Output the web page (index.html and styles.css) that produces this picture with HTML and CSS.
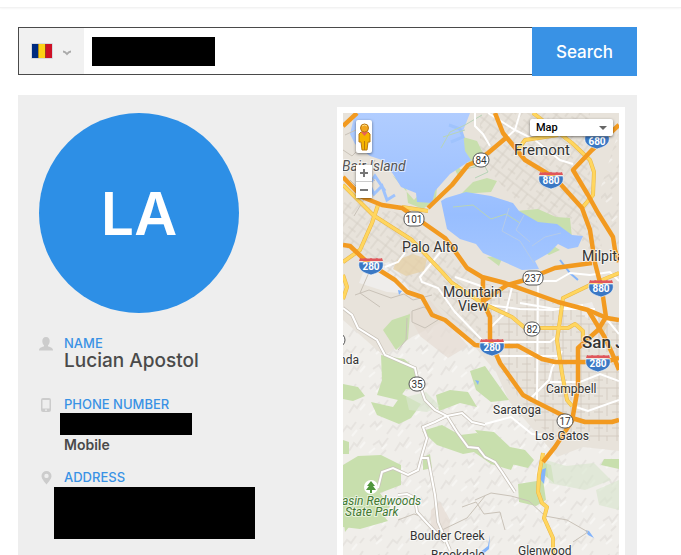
FILE: index.html
```html
<!DOCTYPE html>
<html lang="en">
<head>
    <meta charset="UTF-8">
    <meta name="viewport" content="width=device-width, initial-scale=1.0">
    <link rel="stylesheet" href="styles.css">
    <title>Lucian Apostol</title>
</head>
<body>
    <header class="topbar"></header>
    <main class="content">
        <form class="search">
            <button type="button" class="country" aria-label="Country: Romania">
                <svg class="flag" width="22" height="16" viewBox="0 0 22 16">
                    <rect width="22" height="16" rx="1" fill="#d5d9e0"/>
                    <rect x="1" y="1" width="7" height="14" fill="#002b7f"/>
                    <rect x="7" y="1" width="7" height="14" fill="#fcd116"/>
                    <rect x="14" y="1" width="7" height="14" fill="#ce1126"/>
                    <path d="M7.500 1v14M14.500 1v14" stroke="#7a5a20" stroke-opacity=".6"/>
                </svg>
                <svg class="chevron" width="8" height="6" viewBox="0 0 8 6">
                    <path d="M0 1.500Q2 1.500 4 4Q6 1.500 8 1.500" fill="none" stroke="#aaa" stroke-width="2"/>
                </svg>
            </button>
            <div class="field">
                <input type="text" aria-label="Phone number">
                <span class="mask mask-query"></span>
            </div>
            <button type="submit" class="submit">Search</button>
        </form>

        <section class="panel">
            <div class="profile">
                <div class="avatar">LA</div>
                <div class="row">
                    <svg width="14" height="14" viewBox="0 0 14 14" fill="#ccc">
                        <path d="M7 0c2.500 0 3.700 1.700 3.700 4 0 1.800-.6 3.300-1.700 4.200v1c1 .8 5 1.100 5 3.800v.5H0V13c0-2.700 4-3 5-3.800v-1C3.900 7.300 3.300 5.800 3.300 4c0-2.300 1.200-4 3.700-4z"/>
                    </svg>
                    <div>
                        <h4>NAME</h4>
                        <p class="name">Lucian Apostol</p>
                    </div>
                </div>
                <div class="row row-phone">
                    <svg width="14" height="14" viewBox="0 0 14 14" fill="#ccc" fill-rule="evenodd">
                        <path d="M4 0h6a2 2 0 0 1 2 2v10a2 2 0 0 1-2 2H4a2 2 0 0 1-2-2V2a2 2 0 0 1 2-2zM3.500 2v8.500h7V2zM6 11.500v1.200h2v-1.200z"/>
                    </svg>
                    <div>
                        <h4>PHONE NUMBER</h4>
                        <div class="mask mask-phone"></div>
                        <p class="type">Mobile</p>
                    </div>
                </div>
                <div class="row row-address">
                    <svg width="14" height="14" viewBox="0 0 14 14" fill="#ccc" fill-rule="evenodd">
                        <path d="M7.500 0a5 5 0 0 1 5 5c0 2.800-3 6-5 8.500C5.500 11 2.500 7.800 2.500 5a5 5 0 0 1 5-5zm0 2.700a2.200 2.200 0 1 0 0 4.400 2.200 2.200 0 0 0 0-4.400z"/>
                    </svg>
                    <div>
                        <h4>ADDRESS</h4>
                        <div class="mask mask-address"></div>
                    </div>
                </div>
            </div>

            <div class="map">
                <svg class="map-canvas" viewBox="343 113 276 442" preserveAspectRatio="xMidYMin slice">
                    <defs>
                        <linearGradient id="water" x2="0" y2="1">
                            <stop offset="0" stop-color="#b1cdff"/>
                            <stop offset=".65" stop-color="#98beff"/>
                            <stop offset="1" stop-color="#a5c7ff"/>
                        </linearGradient>
                        <pattern id="grid" width="18" height="16" patternUnits="userSpaceOnUse">
                            <path d="M0 4h18M0 12h9M5 0v16M13 4v12" fill="none" stroke="#d0c8be" stroke-width=".8"/>
                        </pattern>
                        <pattern id="slant" width="18" height="16" patternUnits="userSpaceOnUse" patternTransform="rotate(38)">
                            <path d="M0 4h18M0 12h9M5 0v16M13 4v12" fill="none" stroke="#d2cbc2" stroke-width=".8"/>
                        </pattern>
                        <pattern id="hills" width="46" height="38" patternUnits="userSpaceOnUse">
                            <g fill="none" stroke="#a9a69f" stroke-opacity=".14" stroke-width="2">
                                <path d="M2 9l5-5 2 4 5-5M19 16l6-8 4 3 5-7M5 27l6-4 3 5 6-8M27 33l5-8 3 3 6-9M38 11l4-5M13 37l5-5"/>
                            </g>
                            <path d="M8 12l6-5M30 18l5-6M14 31l5-5M38 30l5-6M1 35l6-5" stroke="#fff" stroke-opacity=".4" stroke-width="2"/>
                        </pattern>
                        <g id="interstate">
                            <path d="M-12-4h24c2 9-6 11-12 13-6-2-14-4-12-13z" fill="#3b78c4" stroke="#fff" stroke-width=".6"/>
                            <path d="M-11-8q3 1 5 0 3 1 6 0 3 1 6 0 2 1 5 0l1 3h-24z" fill="#e0565b"/>
                        </g>
                        <rect id="badge" x="-8" y="-7" width="16" height="14" rx="7" fill="#fff" stroke="#555"/>
                        <rect id="badge-wide" x="-10" y="-7" width="20" height="14" rx="6" fill="#fff" stroke="#555"/>
                    </defs>

                    <rect x="343" y="113" width="276" height="600" fill="#e8e3db"/>
                    <path d="M343 320l16 14 25 22 28-19 34-17 29 27 21 25 13 29 29 34 19 22 26-10 36 4v270H343z" fill="#f0eeea"/>
                    <path d="M365 268l24-6 11 12 12 20-25-2-28-9zM583 304l9-2 9 24-19-11z" fill="#efedeb"/>
                    <path d="M343 320l16 14 25 22 28-19 34-17 29 27 21 25 13 29 29 34 19 22 26-10 36 4v270H343zM600 190l19-60v120l-15-30z" fill="url(#hills)"/>
                    <path d="M430 300l18 22 20 24-20 12-28-22-12-22zM431 510l9-8 10 18-2 25-18-12z" fill="#e5dcd3" opacity=".7"/>
                    <path d="M343 200l60 14 65 58 17 76-27-23-28-28-30-15-30-25-27-10z" fill="url(#slant)"/>
                    <path d="M480 282l80 22 59 14v123h-60l-22-17-30-43-20-35z" fill="url(#grid)"/>
                    <path d="M480 113h110v70l13 70-11 0-24-30-44-15-20-20-24-30z" fill="url(#slant)"/>

                    <g fill="#c8dfad">
                        <path d="M463 137l14 4 6 12-5 14-8-2-8-16zM487 178l10 3-6 11-30 2 12-12zM516 211l22-2 18 8 14 1 2 20-14 4-18-13-20-5zM447 145l10 18 6 12-4 3-13-27z"/>
                        <path d="M392 175l14 12 2 16 15 6 13-10 1-12-12 1-11 12zM392 320l18-6-2 25-12 11-13-20z"/>
                        <path d="M381 355l23 4 11 9 1 22-10-1-8 11-21-5 5-15zM371 402l22 5 9-13 19 10-10 14-12 6-22-9zM470 371l15-5 24 34-18 2-15-12zM343 384l15 3 7 9-12 5-10-2z"/>
                        <path d="M343 465l15-9 23-1 20 10v20l-21 8 10 14-10 5 8 9-28 8-17-2zM422 431l20-6 18 10 17-2 24 18 18 2-8 17-20-6-17-12-11 2-26-9zM343 440l6 2v12h-6z"/>
                        <path d="M475 430l19 2 16 15 15 3 9 10-6 8-25-6-20-21zM518 484l25-4 3 20-10 6-17-4zM423 457l7-3 2 14-9 2zM542 462l9 3 3 18-12-10zM436 395l14-5 18 2 9 15-17-4-21 8zM343 515l23-7 7 10-20 4-8 10z"/>
                        <path d="M604 459h15v10l-18-4zM600 130l7 2-2 8zM540 250l12-5 8 5-11 5zM487 257l16-1-4 10z"/>
                    </g>
                    <path d="M546 460l20 6 28-3 17 17-26 10-36-7zM596 490l23-10v30l-20-5zM406 397l20-5 14 14-13 6-18-2z" fill="#d9e5ce" opacity=".65"/>
                    <path d="M397 260l16-6 14 5-3 12-18 5-13-7zM600 322l8 3-5 9z" fill="#e6cfa3" opacity=".7"/>

                    <path d="M355 113h115l-7 18 2 20 6 9-21 14-15 17-3 12-15-1-1-9-15-6-8-13-11-14-12-4-15-12-5-10zM441 201l5-3 20-6 25 4 22 7 6 8 19 11 19 2 15 11 11 1-5 11-10 2-10-5-9 9-14 8 4 8-17 1-20-9-19-8-7-9-16-5-13-10z" fill="url(#water)"/>
                    <path d="M395 195l-8 5-5-14-8 8-5-10M367 188l8-12 10 15M449 125l11 4 3 8-12 5" fill="none" stroke="#9fc3fd" stroke-width="3"/>
                    <path d="M482 115l-17 10-15 7-9 16M443 137l22-7M460 170l24-5 4 7-13 6M453 207l20-2 18 14 15-5 14 9" fill="none" stroke="#b8d4b8" stroke-width="1"/>
                    <path d="M524 215l-8 15 14 12M509 208l-7 23 18 10 14 22M532 246l13-9 16-4" fill="none" stroke="#b5cbe8" stroke-width="1"/>
                    <path d="M398 290l4 1-3 4zM541 470l5-2-2 16-4-5zM585 530l4 1 5 7-6-3zM490 535l-2 11-9 7 3 2 7-6zM475 380l4 1-1 4z" fill="#83b4fa"/>
                    <path d="M560 260l10 13 8 7" fill="none" stroke="#83b4fa" stroke-width="2"/>

                    <!-- back roads -->
                    <g fill="none" stroke="#c9c2b8">
                        <path d="M355 295l14-5 22 8 13-4 9 6 19-5M412 311l12-4 17 11-16 10-13-6zM398 350l8-10 1-22M370 270l-10 23 20 14M505 530l-5-18-16 2-8-12-14 5M475 500l16-7 20 3 18 5 16 15 22 4 21 12-15 10M398 520l16-6 9 3M442 530l25-12 18-22"/>
                        <path d="M345 135l13-6 6 15-12 12-9-6M350 180l16 16-12 20M375 160l-8 13 8 8"/>
                    </g>
                    <!-- local roads -->
                    <g fill="none" stroke="#c9c3ba" stroke-width="3.500">
                        <path d="M343 308l9 7 6 13 19 12 8 15 30 13 2 9 8 23 10 10 12 6 10 16 11 15 10 1 7 9 10 5 7 10 13 20"/>
                        <path d="M485 425l-13-3-10-9-15 3-12 6-12 5 4 11-5 17-4 15-10 5-15-7-11 4-4 16M422 458l6 0 7 37 3 27 12 28M398 495l9-1 8 4 2 14 10 11 18 19"/>
                    </g>
                    <g fill="none" stroke="#fff" stroke-width="2">
                        <path d="M343 308l9 7 6 13 19 12 8 15 30 13 2 9 8 23 10 10 12 6 10 16 11 15 10 1 7 9 10 5 7 10 13 20"/>
                        <path d="M485 425l-13-3-10-9-15 3-12 6-12 5 4 11-5 17-4 15-10 5-15-7-11 4-4 16M422 458l6 0 7 37 3 27 12 28M398 495l9-1 8 4 2 14 10 11 18 19"/>
                        <path d="M405 253l-7 9-13 5M442 250l-22 27 2 5 16 6 17 24 27 28 16 17M455 277l26 9M475 113v13l8 8 7 12M488 113l27 17 20 10 25 20 13 4M520 113l-5 17-9 8"/>
                        <path d="M480 304l40 5 33 1 30-5M485 342h65l8-6M512 287l-6 25-16 16M538 283l-1 120M495 356h65M520 303l35 6h40M532 397l17-17 3-12 10-17M485 424l26-7 21 17 18 1M576 407l12 4 31-11M540 281l16 0 14-8 20 2 20-3 9 9M605 317l14 17M550 382h30l20-8 19 7"/>
                    </g>
                    <!-- main roads -->
                    <g fill="none" stroke="#e9b647" stroke-width="4" stroke-linejoin="round">
                        <path d="M343 185l30 30 39 25 30 32 10 11 30 20 30 14 13 11h43l7-4 8 7v10M378 205l-6 18-12 27-17 12M402 207l26 4"/>
                        <path d="M533 113l39 30 18 17 4 12-1 23-11 13M518 150l7-10 33-5M619 273l-29 12-27 13-3 22-3 20 5 33 5 27 5 6M343 275l4 12-4 12"/>
                        <path d="M543 453l-4 22-1 17 4 11 5 4-3 11 9 20v90"/>
                    </g>
                    <g fill="none" stroke="#ffd65f" stroke-width="3" stroke-linejoin="round">
                        <path d="M343 185l30 30 39 25 30 32 10 11 30 20 30 14 13 11h43l7-4 8 7v10M378 205l-6 18-12 27-17 12M402 207l26 4"/>
                        <path d="M533 113l39 30 18 17 4 12-1 23-11 13M518 150l7-10 33-5M619 273l-29 12-27 13-3 22-3 20 5 33 5 27 5 6M343 275l4 12-4 12"/>
                        <path d="M543 453l-4 22-1 17 4 11 5 4-3 11 9 20v90"/>
                    </g>
                    <!-- freeways -->
                    <g fill="none" stroke="#f29a20" stroke-width="4.500" stroke-linejoin="round">
                        <path d="M343 126l14-13M343 177l19 20 20 8 20 3 43 30 7 9 15 21 15 9 23 6 53 19 30 8 19 8 12 2"/>
                        <path d="M428 208l24-23 16-20 5-2 15-10 19-16M495 113l8 20 22 27 30 18 27 30 8 22 5 33 7 27 4 27-8 13-20 18v39l-3 17-3 17-17 26-12 15"/>
                        <path d="M619 125l-27 25-19 20 15 25 10 18 15 24 2 13 4 12"/>
                        <path d="M343 245l7 1 18 17 27 17 12 12 15 5 10 18 13 5 30 25 10 1h33l24 13 13 3h50l14-4"/>
                        <path d="M483 277v25l7 15v23l10 23 23 32 9 5 30 15 23 7h27l7-2M482 302l25-17 18-5 30-12 37-5M588 310l16 26 8 17 7 17"/>
                    </g>

                    <g class="place">
                        <text x="514" y="155" class="city">Fremont</text>
                        <text x="402" y="252" class="town">Palo Alto</text>
                        <text x="443" y="297" class="town">Mountain</text>
                        <text x="458" y="311" class="town">View</text>
                        <text x="582" y="261" class="town">Milpitas</text>
                        <text x="582" y="348" class="metro">San Jose</text>
                        <text x="546" y="393" class="small">Campbell</text>
                        <text x="493" y="414" class="small">Saratoga</text>
                        <text x="535" y="440" class="small">Los Gatos</text>
                        <text x="410" y="540" class="small">Boulder Creek</text>
                        <text x="431" y="559" class="small">Brookdale</text>
                        <text x="518" y="555" class="small">Glenwood</text>
                        <text x="359" y="364" class="small" text-anchor="end">La Honda</text>
                        <text x="342" y="171" class="nature">Bair Island</text>
                        <text x="421" y="505" class="park" text-anchor="end">Big Basin Redwoods</text>
                        <text x="345" y="516" class="park">State Park</text>
                    </g>
                    <circle cx="371" cy="487" r="7" fill="#fff"/>
                    <path d="M371 481l4 5h-2l3 4h-4v3h-2v-3h-4l3-4h-2z" fill="#4f963b"/>

                    <use href="#interstate" x="597" y="140"/>
                    <use href="#interstate" x="551" y="180"/>
                    <use href="#interstate" x="371" y="266"/>
                    <use href="#interstate" x="601" y="288"/>
                    <use href="#interstate" x="492" y="347"/>
                    <use href="#interstate" x="598" y="363"/>
                    <g class="shield">
                        <text x="597" y="145">680</text>
                        <text x="551" y="184">880</text>
                        <text x="371" y="270">280</text>
                        <text x="601" y="292">880</text>
                        <text x="492" y="351">280</text>
                        <text x="598" y="367">280</text>
                    </g>
                    <use href="#badge" x="481" y="160"/>
                    <use href="#badge-wide" x="414" y="219"/>
                    <use href="#badge-wide" x="533" y="278"/>
                    <use href="#badge" x="532" y="329"/>
                    <use href="#badge" x="417" y="384"/>
                    <use href="#badge" x="565" y="421"/>
                    <use href="#badge" x="337" y="340"/>
                    <g class="route">
                        <text x="481" y="164">84</text>
                        <text x="414" y="223">101</text>
                        <text x="533" y="282">237</text>
                        <text x="532" y="333">82</text>
                        <text x="417" y="388">35</text>
                        <text x="565" y="425">17</text>
                    </g>
                </svg>

                <div class="map-tools">
                    <button type="button" class="pegman" aria-label="Street View">
                        <svg width="13" height="28" viewBox="0 0 13 28">
                            <path d="M3 9h7l2 2v8h-2l-1 8H4l-1-8H1v-8z" fill="#f5b400" stroke="#bb7a10"/>
                            <path d="M6.500 18v9" stroke="#bb7a10"/>
                            <path d="M3 9h7l-3.500 4z" fill="#e8605b"/>
                            <circle cx="6.500" cy="5" r="4" fill="#f2a51c" stroke="#b87511"/>
                            <path d="M4 3q2.500-2 5 0" stroke="#ffe08a" fill="none"/>
                        </svg>
                    </button>
                    <div class="zoom">
                        <button type="button" aria-label="Zoom in">
                            <svg width="8" height="8" viewBox="0 0 8 8"><path d="M0 4h8M4 0v8" stroke="#777" stroke-width="2"/></svg>
                        </button>
                        <button type="button" aria-label="Zoom out">
                            <svg width="8" height="8" viewBox="0 0 8 8"><path d="M0 4h8" stroke="#777" stroke-width="2"/></svg>
                        </button>
                    </div>
                </div>
                <div class="map-type">
                    <select aria-label="Map type">
                        <option>Map</option>
                        <option>Satellite</option>
                    </select>
                    <svg width="8" height="4" viewBox="0 0 8 4"><path d="M0 0h8L4 4z" fill="#666"/></svg>
                </div>
            </div>
        </section>
    </main>
</body>
</html>
```

FILE: styles.css
```css
* {
    box-sizing: border-box;
}
body {
    margin: 0;
    min-height: 100vh;
    display: flex;
    flex-direction: column;
    background-color: #fff;
    color: #4a4a4a;
    font-family: Inter, "Open Sans", sans-serif;
}
button {
    border: 0;
    padding: 0;
    cursor: pointer;
}
h4, p {
    margin: 0;
}
.topbar {
    height: 8px;
    border-bottom: 1px solid #f2f2f2;
    box-shadow: 0 1px 2px #f6f6f6;
}
.content {
    flex: 1;
    display: flex;
    flex-direction: column;
    gap: 19px;
    padding: 19px 44px 0 18px;
}

/* search bar */
.search {
    display: flex;
    height: 49px;
}
.country {
    display: flex;
    align-items: center;
    gap: 10px;
    width: 66px;
    height: 48px;
    padding-left: 12px;
    background-color: #f1f1f1;
    border: 1px solid #4a4a4a;
    border-right: 0;
}
.chevron {
    margin-top: 4px;
}
.field {
    position: relative;
    flex: 1;
    height: 48px;
}
.field input {
    width: 100%;
    height: 100%;
    padding: 0 8px;
    border: 1px solid #4a4a4a;
    border-width: 1px 0;
    font: inherit;
    outline: 0;
}
.submit {
    width: 105px;
    background-color: #3992e5;
    color: #fff;
    font-family: inherit;
    font-size: 17px;
    font-weight: 500;
}
.mask {
    background-color: #000;
}
.mask-query {
    position: absolute;
    left: 8px;
    top: 10px;
    width: 123px;
    height: 29px;
}

/* result */
.panel {
    flex: 1;
    display: flex;
    justify-content: space-between;
    padding: 12px 12px 0 21px;
    background-color: #eee;
}
.profile {
    padding-top: 6px;
}
.avatar {
    display: flex;
    align-items: center;
    justify-content: center;
    width: 200px;
    height: 200px;
    margin-bottom: 22px;
    border-radius: 50%;
    background-color: #2d8fe6;
    color: #fff;
    font-size: 59px;
    font-weight: 600;
}
.row {
    display: flex;
    gap: 11px;
    margin-bottom: 25px;
}
.row-phone {
    margin-bottom: 14px;
}
.row-address {
    margin-bottom: 0;
}
.row > svg {
    margin-top: 2px;
}
.row h4 {
    color: #3992e5;
    font-size: 13px;
    font-weight: 500;
    line-height: 16px;
}
.name {
    font-size: 19px;
    font-weight: 500;
    line-height: 20px;
}
.type {
    font-size: 14px;
    font-weight: 600;
    line-height: 20px;
}
.mask-phone {
    width: 132px;
    height: 22px;
    margin: 1px 0 0 -4px;
}
.mask-address {
    width: 201px;
    height: 52px;
    margin: 2px 0 0 -10px;
}

/* map */
.map {
    position: relative;
    width: 288px;
    border: 6px solid #fff;
    border-bottom: 0;
}
.map-canvas {
    display: block;
    width: 100%;
    height: 100%;
}
.map-canvas text {
    font-family: Roboto, sans-serif;
}
.place text {
    fill: #333;
    stroke: #fff;
    stroke-opacity: 0.6;
    stroke-width: 2px;
    paint-order: stroke;
}
.map-canvas .city {
    font-size: 15px;
}
.map-canvas .town {
    font-size: 14px;
}
.map-canvas .metro {
    font-size: 17px;
    font-weight: 500;
}
.map-canvas .small {
    font-size: 12px;
}
.map-canvas .nature {
    font-size: 14px;
    font-style: italic;
    fill: #555;
}
.map-canvas .park {
    font-size: 12px;
    font-style: italic;
    fill: #427832;
}
.shield text {
    fill: #fff;
    font-size: 10px;
    font-weight: 700;
    text-anchor: middle;
}
.route text {
    fill: #333;
    font-size: 10px;
    text-anchor: middle;
}
.map-tools {
    position: absolute;
    left: 13px;
    top: 7px;
    display: flex;
    flex-direction: column;
    gap: 12px;
}
.map-tools button {
    display: flex;
    align-items: center;
    justify-content: center;
    width: 16px;
    background-color: #fff;
}
.map-tools .pegman,
.zoom {
    border-radius: 2px;
    background-color: #fff;
    box-shadow: 0 1px 3px rgba(0, 0, 0, 0.5);
}
.map-tools .pegman {
    height: 33px;
}
.zoom button {
    height: 16px;
}
.zoom button + button {
    height: 17px;
    border-top: 1px solid #ccc;
}
.map-type {
    position: absolute;
    right: 6px;
    top: 6px;
    width: 83px;
    height: 17px;
    display: flex;
    align-items: center;
    padding-right: 6px;
    border-radius: 2px;
    background-color: #fff;
    box-shadow: 0 1px 3px rgba(0, 0, 0, 0.5);
}
.map-type select {
    flex: 1;
    height: 17px;
    padding: 0 6px;
    appearance: none;
    border: 0;
    background: none;
    color: #000;
    font-family: Roboto, sans-serif;
    font-size: 11px;
    font-weight: 500;
}
```
